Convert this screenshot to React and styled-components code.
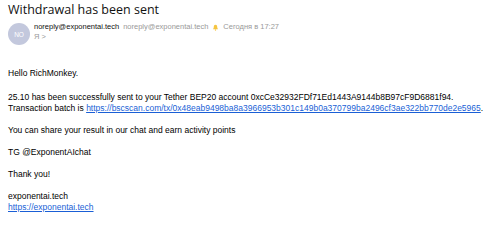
import styled, { createGlobalStyle } from "styled-components";

const Global = createGlobalStyle`
  body {
    margin: 0;
    background: #fff;
    font-family: "Liberation Sans", Arial, sans-serif;
    color: #000;
  }
`;

const Page = styled.div`
  width: 500px;
  height: 240px;
  padding: 2px 8px 0;
  box-sizing: border-box;
  overflow: hidden;
`;

const Subject = styled.h1`
  margin: 0;
  font-family: "Open Sans", "Liberation Sans", sans-serif;
  font-size: 12.5px;
  font-weight: 400;
  line-height: 16px;
  color: #111;
`;

const Header = styled.div`
  display: flex;
  align-items: flex-start;
  gap: 4px;
  margin-top: 4px;
`;

const Avatar = styled.div`
  width: 22px;
  height: 22px;
  flex-shrink: 0;
  border-radius: 50%;
  background: #c3c8dd;
  color: #fff;
  font-size: 6.5px;
  display: flex;
  align-items: center;
  justify-content: center;
  margin-top: 1px;
`;

const Meta = styled.div`
  display: flex;
  flex-direction: column;
  font-size: 7.5px;
  line-height: 10px;
`;

const FromRow = styled.div`
  display: flex;
  align-items: center;
  gap: 4px;
`;

const Name = styled.span`
  color: #111;
`;

const Grey = styled.span`
  color: #999;
`;

const Body = styled.div`
  margin-top: 23px;
  font-size: 8.5px;
  line-height: 11px;

  p {
    margin: 0 0 11px;
  }

  p:first-child {
    margin-bottom: 13px;
  }

  a {
    color: #1a5fd6;
    text-decoration: underline;
  }
`;

const Bell = () => (
  <svg width="7" height="7" viewBox="0 0 10 10">
    <path d="M5 1 C3 1 2.5 3 2.5 5 L1.5 7.5 L8.5 7.5 L7.5 5 C7.5 3 7 1 5 1 Z" fill="#f5c542" />
    <circle cx="5" cy="8.6" r="1" fill="#f5c542" />
  </svg>
);

export default function App() {
  return (
    <Page>
      <Global />
      <Subject>Withdrawal has been sent</Subject>
      <Header>
        <Avatar>NO</Avatar>
        <Meta>
          <FromRow>
            <Name>noreply@exponentai.tech</Name>
            <Grey>noreply@exponentai.tech</Grey>
            <Bell />
            <Grey>Сегодня в 17:27</Grey>
          </FromRow>
          <Grey>Я &gt;</Grey>
        </Meta>
      </Header>
      <Body>
        <p>Hello RichMonkey.</p>
        <p>
          25.10 has been successfully sent to your Tether BEP20 account 0xcCe32932FDf71Ed1443A9144b8B97cF9D6881f94.
          <br />
          Transaction batch is{" "}
          <a href="#">https://bscscan.com/tx/0x48eab9498ba8a3966953b301c149b0a370799ba2496cf3ae322bb770de2e5965</a>.
        </p>
        <p>You can share your result in our chat and earn activity points</p>
        <p>TG @ExponentAIchat</p>
        <p>Thank you!</p>
        <p>
          exponentai.tech
          <br />
          <a href="#">https://exponentai.tech</a>
        </p>
      </Body>
    </Page>
  );
}
